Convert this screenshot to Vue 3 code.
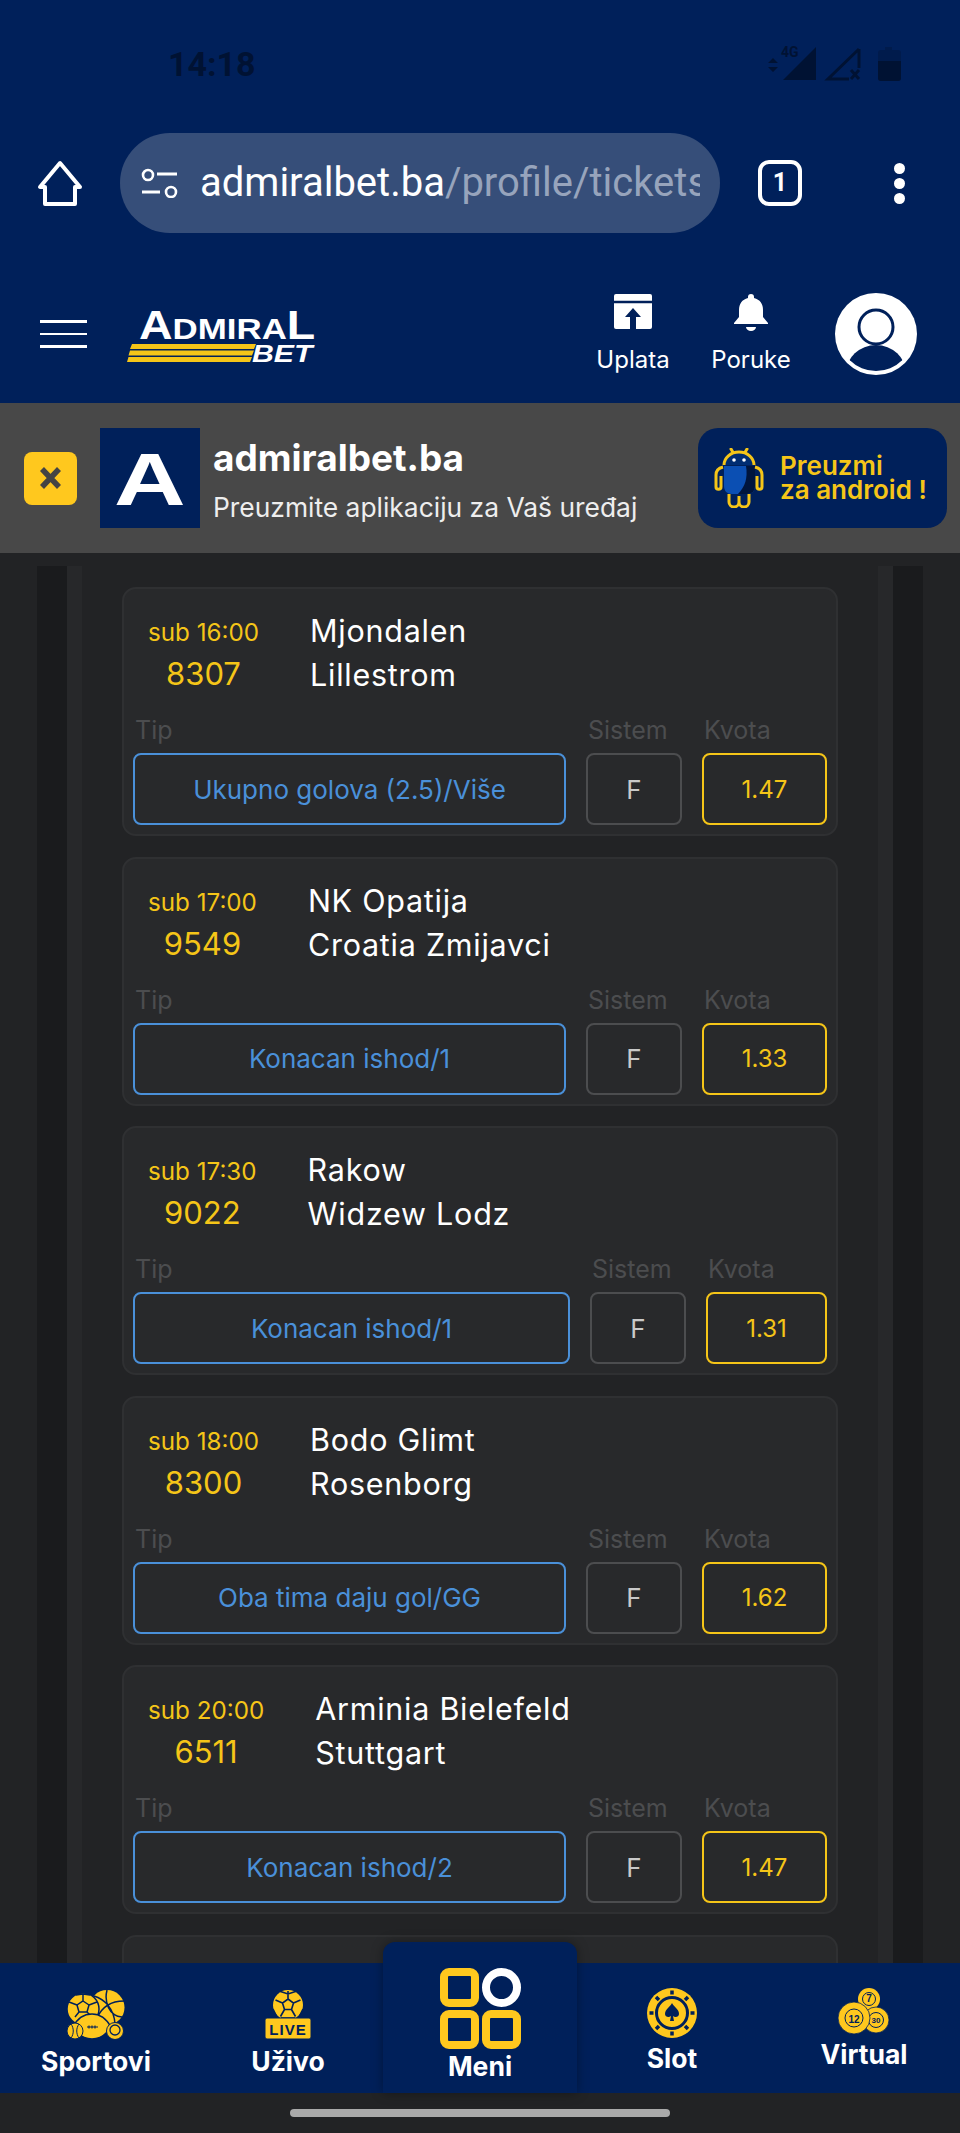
<template>
  <div class="page">
    <header class="top">
      <div class="status">
        <span class="time">14:18</span>
        <svg class="status-icons" width="134" height="36" viewBox="0 0 134 36">
          <path d="M1 17l5-5 5 5zM1 21l5 5 5-5z" fill="#001233" />
          <text x="14" y="11" class="fourg">4G</text>
          <path d="M49 1V34H16z" fill="#001233" />
          <path d="M92 3V22M92 3L61 33H82" fill="none" stroke="#001233" stroke-width="3" />
          <path d="M84 24l8 9M92 24l-8 9" stroke="#001233" stroke-width="3" />
          <path d="M118 1h7v3h6a3 3 0 013 3v25a3 3 0 01-3 3h-17a3 3 0 01-3-3V7a3 3 0 013-3h4z" fill="#001b4c" />
          <path d="M111 15h23v17a3 3 0 01-3 3h-17a3 3 0 01-3-3z" fill="#001233" />
        </svg>
      </div>

      <div class="browser">
        <svg class="home" width="46" height="46" viewBox="0 0 46 46">
          <path d="M23 3L3 27H8V44H38V27H43Z" fill="none" stroke="#fff" stroke-width="4" stroke-linejoin="round" />
        </svg>
        <div class="omnibox">
          <svg width="38" height="30" viewBox="0 0 38 30">
            <circle cx="8" cy="7" r="5" fill="none" stroke="#fff" stroke-width="2.6" />
            <path d="M17 6H37M2 24H20" stroke="#fff" stroke-width="3" />
            <circle cx="31" cy="24" r="5" fill="none" stroke="#fff" stroke-width="2.6" />
          </svg>
          <div class="url"><span>admiralbet.ba</span><span class="url-path">/profile/tickets</span></div>
        </div>
        <div class="tabs">1</div>
        <div class="dots"><i></i><i></i><i></i></div>
      </div>

      <div class="site">
        <div class="burger"><i></i><i></i><i></i></div>
        <svg class="logo" width="192" height="54" viewBox="0 0 192 54">
          <text transform="translate(12 29) scale(1.162 1)" class="logo-text"><tspan class="big">A</tspan>DMIRA<tspan class="big">L</tspan></text>
          <path d="M5 34H129L127 39H3zM3 40.500H127L125 45.500H1.500zM1.500 47H125L123 52H0z" fill="#f5c518" />
          <text transform="translate(125 52) scale(1.26 1)" class="logo-bet">BET</text>
        </svg>
        <div class="actions">
          <div class="action">
            <svg width="38" height="37" viewBox="0 0 38 37">
              <path d="M2 0H36a2 2 0 012 2V33a2 2 0 01-2 2H2a2 2 0 01-2-2V2a2 2 0 012-2z" fill="#fff" />
              <path d="M0 8H38" stroke="#00205a" stroke-width="2.5" />
              <path d="M19 14l-8 9h5v12h6V23h5z" fill="#00205a" />
            </svg>
            <span>Uplata</span>
          </div>
          <div class="action">
            <svg width="34" height="37" viewBox="0 0 34 37">
              <path d="M17 0a3 3 0 013 3v1c6 1.500 9 6 9 12v7l5 6v1H0v-1l5-6v-7c0-6 3-10.500 9-12V3a3 3 0 013-3z" fill="#fff" />
              <path d="M12 33h10a5 4 0 01-10 0z" fill="#fff" />
            </svg>
            <span>Poruke</span>
          </div>
          <svg class="avatar" width="82" height="82" viewBox="0 0 82 82">
            <defs>
              <clipPath id="avatarClip"><circle cx="41" cy="41" r="37" /></clipPath>
            </defs>
            <circle cx="41" cy="41" r="41" fill="#fff" />
            <ellipse cx="41" cy="80" rx="30" ry="28" fill="#00205a" clip-path="url(#avatarClip)" />
            <circle cx="41" cy="34" r="17" fill="#fff" stroke="#00205a" stroke-width="3" />
          </svg>
        </div>
      </div>
    </header>

    <div class="banner">
      <button class="close">
        <svg width="23" height="22" viewBox="0 0 23 22"><path d="M3 2l17 18M20 2L3 20" stroke="#444" stroke-width="5.500" /></svg>
      </button>
      <div class="app-icon"><span>A</span></div>
      <div class="app-text">
        <strong>admiralbet.ba</strong>
        <span>Preuzmite aplikaciju za Vaš uređaj</span>
      </div>
      <div class="get-app">
        <svg width="50" height="60" viewBox="0 0 50 60">
          <path d="M17 1l3 5M33 1l-3 5" stroke="#f5c518" stroke-width="3" stroke-linecap="round" />
          <path d="M10 17a15 13 0 0130 0" fill="#002d72" stroke="#f5c518" stroke-width="3" />
          <path d="M10 18h31v20c0 5-3 8-8 8H18c-5 0-8-3-8-8z" fill="#0b4fb3" />
          <path d="M32 18h9v20c0 5-3 8-8 8h-9c7-7 10-16 8-28z" fill="#00153d" />
          <circle cx="20" cy="12" r="1.800" fill="#fff" />
          <circle cx="30" cy="12" r="1.800" fill="#fff" />
          <path d="M9 19c-4 1-7 4-7 8v12c0 3 5 3 5 0V28M41 19c4 1 7 4 7 8v12c0 3-5 3-5 0V28" fill="none" stroke="#f5c518" stroke-width="3" />
          <path d="M15 46v8a5 5 0 0010 0v-6M25 48v6a5 5 0 0010 0v-8" fill="none" stroke="#f5c518" stroke-width="3" />
        </svg>
        <span>Preuzmi<br />za android !</span>
      </div>
    </div>

    <main class="content">
      <div class="strip">
        <div class="strip-inner">
          <div class="list">
            <section v-for="m in matches" :key="m.code" class="card">
              <div class="match">
                <div class="when">
                  <span class="day">{{ m.day }}</span>
                  <span class="code">{{ m.code }}</span>
                </div>
                <div class="teams">
                  <span>{{ m.home }}</span>
                  <span>{{ m.away }}</span>
                </div>
              </div>
              <div class="odds" :style="{ gridTemplateColumns: `1fr 96px ${m.oddWidth}px` }">
                <label>Tip</label>
                <label>Sistem</label>
                <label>Kvota</label>
                <div class="box tip">{{ m.tip }}</div>
                <div class="box sys">F</div>
                <div class="box odd">{{ m.odd }}</div>
              </div>
            </section>
            <section class="card"></section>
          </div>
        </div>
      </div>
    </main>

    <nav class="bottom">
      <a class="nav-item">
        <svg width="58" height="50" viewBox="0 0 58 50">
          <circle cx="40" cy="17.500" r="17.500" fill="#ffc81e" />
          <path d="M40 0c-3 12 2 26 15 27M27 6c10 3 20 12 21 28M30 28c4-9 12-17 27-17" fill="none" stroke="#00205a" stroke-width="1.500" />
          <circle cx="16" cy="19" r="16" fill="#ffc81e" stroke="#00205a" stroke-width="1.500" />
          <path d="M16 11l6 4-2 7h-8l-2-7zM16 11V4M22 15l8-3M10 15l-8-3M9 5l7-1 7 1M12 22l-4 5M20 22l4 4" fill="none" stroke="#00205a" stroke-width="1.500" />
          <path d="M6 37c5-10 12-13 19-13s14 4 19 13c-5 8-12 12-19 12S11 45 6 37z" fill="#ffc81e" stroke="#00205a" stroke-width="1.500" />
          <path d="M20 37H31M22 35.500v3M25 35.500v3M28 35.500v3" stroke="#00205a" stroke-width="1.100" />
          <circle cx="8" cy="41" r="8" fill="#ffc81e" stroke="#00205a" stroke-width="1" />
          <path d="M4 34c3 4 3 10 0 14M12 34c-3 4-3 10 0 14" fill="none" stroke="#00205a" stroke-width="1" />
          <circle cx="48" cy="41" r="8.500" fill="#ffc81e" stroke="#00205a" stroke-width="1" />
          <circle cx="48" cy="40" r="5" fill="none" stroke="#00205a" stroke-width="1.300" />
        </svg>
        <span>Sportovi</span>
      </a>
      <a class="nav-item">
        <svg width="48" height="50" viewBox="0 0 48 50">
          <circle cx="24" cy="15" r="15" fill="#ffc81e" />
          <path d="M24 9l5.500 4-2 6.500h-7l-2-6.500zM24 9V1M29.500 13l7-3M27.500 19.500l4 7M20.500 19.500l-4 7M18.500 13l-7-3M17 28h14M15 1l9 3 9-3M9 19l4 8M39 19l-4 8" fill="none" stroke="#00205a" stroke-width="1.600" />
          <rect x="1" y="28" width="46" height="21" rx="2" fill="#ffc81e" stroke="#00205a" stroke-width="1" />
          <text x="24" y="44.500" class="live-text" text-anchor="middle">LIVE</text>
        </svg>
        <span>Uživo</span>
      </a>
      <a class="nav-item nav-menu">
        <div class="menu-grid"><i></i><i class="round"></i><i></i><i></i></div>
        <span>Meni</span>
      </a>
      <a class="nav-item nav-slot">
        <svg width="50" height="50" viewBox="0 0 50 50">
          <circle cx="25" cy="25" r="25" fill="#ffc81e" />
          <circle cx="25" cy="25" r="15.500" fill="none" stroke="#00205a" stroke-width="3" />
          <path d="M25 15c2 4 7 6 7 11 0 3-4 4-6 2l1 5h-4l1-5c-2 2-6 1-6-2 0-5 5-7 7-11z" fill="#00205a" />
          <path d="M25 2.500v4M25 43.500v4M2.500 25h4M43.500 25h4M9 9l3 3M41 9l-3 3M9 41l3-3M41 41l-3-3" stroke="#00205a" stroke-width="3.500" />
        </svg>
        <span>Slot</span>
      </a>
      <a class="nav-item nav-virtual">
        <svg width="52" height="46" viewBox="0 0 52 46">
          <circle cx="31" cy="11" r="11" fill="#ffc81e" />
          <circle cx="31" cy="11" r="6.500" fill="none" stroke="#00205a" stroke-width="1" />
          <text x="31" y="14" class="ball-text" text-anchor="middle">7</text>
          <circle cx="38" cy="32" r="13" fill="#ffc81e" stroke="#00205a" stroke-width="0.800" />
          <circle cx="38" cy="32" r="7.500" fill="none" stroke="#00205a" stroke-width="1" />
          <text x="38" y="35" class="ball-text small" text-anchor="middle">30</text>
          <circle cx="16" cy="30" r="16" fill="#ffc81e" stroke="#00205a" stroke-width="0.800" />
          <circle cx="16" cy="30" r="9" fill="none" stroke="#00205a" stroke-width="1" />
          <text x="16" y="34.500" class="ball-text" text-anchor="middle">12</text>
        </svg>
        <span>Virtual</span>
      </a>
    </nav>

    <div class="gesture"><i></i></div>
  </div>
</template>

<script setup>
const matches = [
  { day: 'sub 16:00', code: '8307', home: 'Mjondalen', away: 'Lillestrom', tip: 'Ukupno golova (2.5)/Više', odd: '1.47', oddWidth: 125 },
  { day: 'sub 17:00', code: '9549', home: 'NK Opatija', away: 'Croatia Zmijavci', tip: 'Konacan ishod/1', odd: '1.33', oddWidth: 125 },
  { day: 'sub 17:30', code: '9022', home: 'Rakow', away: 'Widzew Lodz', tip: 'Konacan ishod/1', odd: '1.31', oddWidth: 121 },
  { day: 'sub 18:00', code: '8300', home: 'Bodo Glimt', away: 'Rosenborg', tip: 'Oba tima daju gol/GG', odd: '1.62', oddWidth: 125 },
  { day: 'sub 20:00', code: '6511', home: 'Arminia Bielefeld', away: 'Stuttgart', tip: 'Konacan ishod/2', odd: '1.47', oddWidth: 125 },
]
</script>

<style>
html, body {
  margin: 0;
  background: #222325;
}
</style>

<style scoped>
.page {
  width: 960px;
  height: 2133px;
  display: flex;
  flex-direction: column;
  overflow: hidden;
  background: #222325;
  font-family: Inter, "Noto Sans", sans-serif;
  color: #fff;
}

.top {
  background: #00205a;
  height: 403px;
  flex: none;
}

.status {
  height: 133px;
  display: flex;
  justify-content: space-between;
  align-items: flex-start;
  padding: 0 59px 0 168px;
  box-sizing: border-box;
}

.time {
  font-family: Roboto, sans-serif;
  font-weight: 700;
  font-size: 34px;
  line-height: 40px;
  margin-top: 44px;
  color: #001233;
}

.status-icons {
  margin-top: 46px;
}

.fourg {
  font-family: Roboto, sans-serif;
  font-size: 14px;
  font-weight: 700;
  fill: #001233;
}

.browser {
  height: 100px;
  display: flex;
  align-items: center;
  padding-left: 37px;
}

.omnibox {
  width: 600px;
  height: 100px;
  margin-left: 37px;
  border-radius: 50px;
  background: #364e79;
  display: flex;
  align-items: center;
  box-sizing: border-box;
  padding-left: 20px;
}

.url {
  margin-left: 22px;
  width: 500px;
  overflow: hidden;
  white-space: nowrap;
  font-family: Roboto, sans-serif;
  font-size: 40px;
  line-height: 48px;
}

.url-path {
  color: #97a4bc;
}

.tabs {
  width: 44px;
  height: 46px;
  margin-left: 38px;
  box-sizing: border-box;
  border: 4px solid #fff;
  border-radius: 11px;
  font-family: Roboto, sans-serif;
  font-weight: 700;
  font-size: 25px;
  line-height: 38px;
  text-align: center;
}

.dots {
  margin-left: 92px;
  display: flex;
  flex-direction: column;
  gap: 4px;
}

.dots i {
  width: 11px;
  height: 11px;
  border-radius: 50%;
  background: #fff;
}

.site {
  display: flex;
  align-items: flex-start;
  padding: 60px 0 0 40px;
}

.burger {
  width: 47px;
  margin-top: 27px;
  display: flex;
  flex-direction: column;
  gap: 10px;
}

.burger i {
  height: 2.500px;
  background: #fff;
}

.logo {
  margin: 17px 0 0 40px;
}

.actions {
  display: flex;
  align-items: flex-start;
  margin-left: auto;
  margin-right: 43px;
}

.action {
  width: 88px;
  display: flex;
  flex-direction: column;
  align-items: center;
  gap: 15px;
  font-size: 24px;
  line-height: 28px;
  margin-right: 30px;
}

.action:nth-child(2) {
  margin-right: 40px;
}

.action svg {
  margin-top: 1px;
}

.banner {
  background: #484848;
  height: 150px;
  flex: none;
  display: flex;
  align-items: center;
  box-sizing: border-box;
  padding: 0 13px 0 24px;
}

.close {
  width: 53px;
  height: 53px;
  padding: 0;
  border: none;
  border-radius: 8px;
  background: #ffc81e;
  display: flex;
  align-items: center;
  justify-content: center;
}

.app-icon {
  width: 100px;
  height: 100px;
  margin-left: 23px;
  background: #00205a;
  font-family: "Liberation Sans", sans-serif;
  font-weight: 700;
  font-size: 74px;
  line-height: 104px;
  text-align: center;
}

.app-icon span {
  display: inline-block;
  transform: scaleX(1.34);
}

.app-text {
  margin-left: 13px;
  height: 100px;
  display: flex;
  flex-direction: column;
  justify-content: space-between;
}

.app-text strong {
  font-size: 37px;
  line-height: 44px;
  margin-top: 8px;
  font-weight: 700;
}

.app-text span {
  font-size: 26.400px;
  line-height: 32px;
  margin-bottom: 5px;
  color: #eee;
}

.get-app {
  width: 249px;
  height: 100px;
  margin-left: auto;
  box-sizing: border-box;
  padding-left: 16px;
  border-radius: 20px;
  background: #00205a;
  display: flex;
  align-items: center;
  gap: 16px;
  color: #f5c518;
  font-weight: 600;
  font-size: 26px;
  line-height: 24px;
  white-space: nowrap;
}

.content {
  flex: 1;
  min-height: 0;
  overflow: hidden;
  padding: 13px 37px 0;
}

.strip {
  background: #1a1b1d;
  padding: 0 30px;
}

.strip-inner {
  background: #27282a;
  padding: 0 15px;
}

.list {
  background: #222325;
  padding: 21px 40px 0;
  display: flex;
  flex-direction: column;
  gap: 20.500px;
}

.card {
  height: 249px;
  box-sizing: border-box;
  border: 2px solid #2f3032;
  border-radius: 14px;
  background: #28292b;
  padding: 0 9px;
}

.match {
  display: flex;
  padding: 20px 0 0 15px;
  height: 110px;
  box-sizing: border-box;
  gap: 51px;
}

.when,
.teams {
  display: flex;
  flex-direction: column;
}

.when {
  align-items: center;
  color: #f5c518;
}

.day {
  font-size: 24.200px;
  line-height: 40px;
  margin-top: 4px;
}

.code {
  font-size: 31px;
  line-height: 44px;
  margin-top: -1px;
}

.teams {
  font-size: 30.500px;
  line-height: 44px;
  letter-spacing: 0.750px;
}

.odds {
  display: grid;
  grid-template-rows: 38px 72px;
  column-gap: 20px;
  margin-top: 16px;
}

.odds label {
  font-size: 25px;
  line-height: 30px;
  color: #4c4d4f;
  padding-left: 2px;
}

.box {
  box-sizing: border-box;
  border: 2px solid;
  border-radius: 8px;
  display: flex;
  align-items: center;
  justify-content: center;
}

.tip {
  border-color: #4a90d9;
  color: #4a90d9;
  font-size: 26px;
}

.sys {
  border-color: #4c4d4f;
  color: #c9c9c9;
  font-size: 26px;
}

.odd {
  border-color: #f5c518;
  color: #f5c518;
  font-size: 24px;
}

.bottom {
  height: 130px;
  flex: none;
  background: #00205a;
  display: grid;
  grid-template-columns: repeat(5, 192px);
  justify-items: center;
  position: relative;
  z-index: 1;
}

.nav-item {
  display: flex;
  flex-direction: column;
  align-items: center;
  font-weight: 700;
  font-size: 26.500px;
  line-height: 30px;
  padding-top: 27px;
  gap: 6px;
}

.nav-menu {
  width: 194px;
  height: 151px;
  margin-top: -21px;
  box-sizing: border-box;
  padding-top: 26px;
  gap: 2px;
  background: #00205a;
  border-radius: 12px 12px 0 0;
  box-shadow: 0 0 12px rgba(0, 0, 0, 0.35);
}

.nav-slot {
  padding-top: 25px;
  gap: 5px;
}

.nav-virtual {
  padding-top: 25px;
  gap: 5px;
}

.menu-grid {
  display: grid;
  grid-template-columns: 39px 39px;
  gap: 3px;
}

.menu-grid i {
  height: 39px;
  box-sizing: border-box;
  border: 8px solid #ffc81e;
  border-radius: 9px;
}

.menu-grid i.round {
  border-color: #fff;
  border-radius: 50%;
}

.live-text {
  font-family: "Liberation Sans", sans-serif;
  font-weight: 700;
  font-size: 15px;
  letter-spacing: 1px;
  fill: #00205a;
}

.ball-text {
  font-family: "Liberation Sans", sans-serif;
  font-size: 10px;
  fill: #00205a;
}

.ball-text.small {
  font-size: 8px;
}

.gesture {
  height: 40px;
  flex: none;
  display: flex;
  justify-content: center;
  padding-top: 16px;
  box-sizing: border-box;
}

.gesture i {
  width: 380px;
  height: 8px;
  border-radius: 4px;
  background: #aaa;
}

.logo-text {
  font-family: "Liberation Sans", sans-serif;
  font-weight: 700;
  font-size: 30px;
  fill: #fff;
}

.logo-text .big {
  font-size: 40px;
}

.logo-bet {
  font-family: "Liberation Sans", sans-serif;
  font-weight: 700;
  font-style: italic;
  font-size: 24px;
  fill: #fff;
}
</style>
